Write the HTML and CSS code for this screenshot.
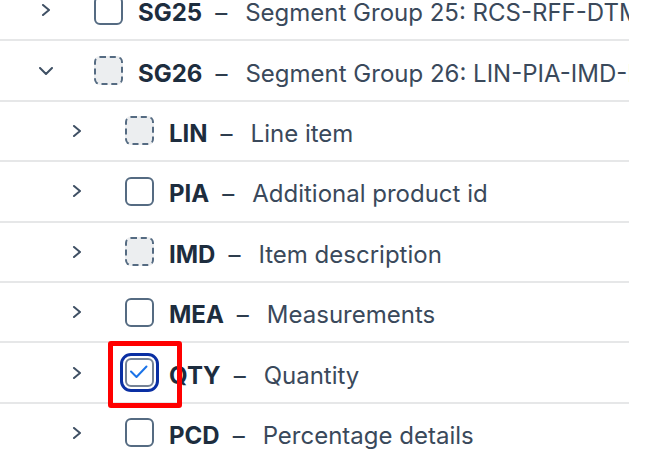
FILE: index.html
```html
<!DOCTYPE html>
<html lang="en">
<head>
<meta charset="utf-8">
<title>Segment tree</title>
<link rel="stylesheet" href="styles.css">
</head>
<body>
<ul class="tree">
  <li class="row lvl1">
    <span class="exp"><svg width="10" height="12" viewBox="0 0 10 12"><polyline points="2,1 8,6 2,11" /></svg></span>
    <span class="cb"></span>
    <span class="code">SG25</span><span class="sep">–</span><span class="desc">Segment Group 25: RCS-RFF-DTM-FTX</span>
  </li>
  <li class="row lvl1">
    <span class="exp"><svg width="14" height="8" viewBox="0 0 14 8"><polyline points="1,1 7,7 13,1" /></svg></span>
    <span class="cb partial"></span>
    <span class="code">SG26</span><span class="sep">–</span><span class="desc">Segment Group 26: LIN-PIA-IMD-MEA-QTY-PCD</span>
  </li>
  <li class="row lvl2">
    <span class="exp"><svg width="10" height="12" viewBox="0 0 10 12"><polyline points="2,1 8,6 2,11" /></svg></span>
    <span class="cb partial"></span>
    <span class="code">LIN</span><span class="sep">–</span><span class="desc">Line item</span>
  </li>
  <li class="row lvl2">
    <span class="exp"><svg width="10" height="12" viewBox="0 0 10 12"><polyline points="2,1 8,6 2,11" /></svg></span>
    <span class="cb"></span>
    <span class="code">PIA</span><span class="sep">–</span><span class="desc">Additional product id</span>
  </li>
  <li class="row lvl2">
    <span class="exp"><svg width="10" height="12" viewBox="0 0 10 12"><polyline points="2,1 8,6 2,11" /></svg></span>
    <span class="cb partial"></span>
    <span class="code">IMD</span><span class="sep">–</span><span class="desc">Item description</span>
  </li>
  <li class="row lvl2">
    <span class="exp"><svg width="10" height="12" viewBox="0 0 10 12"><polyline points="2,1 8,6 2,11" /></svg></span>
    <span class="cb"></span>
    <span class="code">MEA</span><span class="sep">–</span><span class="desc">Measurements</span>
  </li>
  <li class="row lvl2">
    <span class="exp"><svg width="10" height="12" viewBox="0 0 10 12"><polyline points="2,1 8,6 2,11" /></svg></span>
    <span class="cb checked focus"><svg width="29" height="29" viewBox="0 0 29 29"><polyline points="6,13.5 11.5,19 21.5,8.5" /></svg><span class="mark"></span></span>
    <span class="code">QTY</span><span class="sep">–</span><span class="desc">Quantity</span>
  </li>
  <li class="row lvl2">
    <span class="exp"><svg width="10" height="12" viewBox="0 0 10 12"><polyline points="2,1 8,6 2,11" /></svg></span>
    <span class="cb"></span>
    <span class="code">PCD</span><span class="sep">–</span><span class="desc">Percentage details</span>
  </li>
</ul>
</body>
</html>
```

FILE: styles.css
```css
html, body {
  margin: 0;
  padding: 0;
  background: #ffffff;
}

body {
  font-family: Inter, "Liberation Sans", sans-serif;
  overflow: hidden;
}

.tree {
  list-style: none;
  margin: -19px 0 0 0;
  padding: 0;
  width: 629px;
}

.row {
  display: flex;
  align-items: center;
  height: 58.4px;
  border-bottom: 2px solid #e6e7e8;
  white-space: nowrap;
  font-size: 24px;
}

.lvl1 { padding-left: 31px; }
.lvl2 { padding-left: 62px; }

.exp {
  width: 30px;
  flex: none;
  display: flex;
  justify-content: center;
  align-items: center;
}

.exp svg polyline {
  fill: none;
  stroke: #3f5064;
  stroke-width: 2;
  stroke-linecap: round;
  stroke-linejoin: round;
}

.cb {
  position: relative;
  flex: none;
  box-sizing: border-box;
  width: 29px;
  height: 29px;
  margin-left: 33px;
  border: 2px solid #556b82;
  border-radius: 6px;
  background: #ffffff;
}

.cb.partial {
  border-style: dashed;
  background: #eceef0;
}

.cb.checked {
  border-color: #758396;
}

.cb.checked svg {
  position: absolute;
  left: -2px;
  top: -2px;
}

.cb.checked svg polyline {
  fill: none;
  stroke: #1a73e8;
  stroke-width: 2;
  stroke-linecap: round;
  stroke-linejoin: round;
}

.cb.focus {
  outline: 3px solid #0a2fa3;
  outline-offset: 2px;
}

.mark {
  position: absolute;
  left: -19px;
  top: -19px;
  width: 64px;
  height: 57px;
  border: 5px solid #ff0000;
  border-radius: 3px;
}

.code,
.sep,
.desc {
  padding-top: 5px;
}

.code {
  flex: none;
  margin-left: 15px;
  font-weight: 700;
  color: #1d2d3e;
}

.sep {
  flex: none;
  margin: 0 18px 0 13px;
  color: #2e3d4e;
}

.desc {
  min-width: 0;
  overflow: hidden;
  color: #3a495b;
}
```
